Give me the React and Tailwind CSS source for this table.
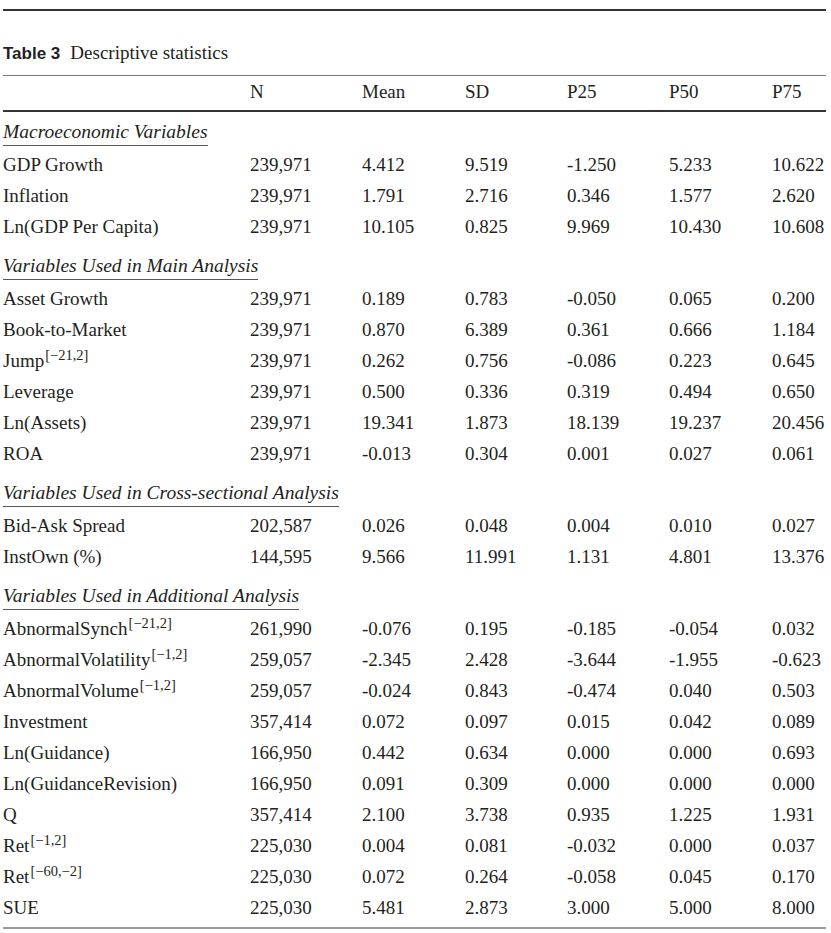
import React from "react";

const sections = [
  {
    title: "Macroeconomic Variables",
    first: true,
    rows: [
      ["GDP Growth", null, "239,971", "4.412", "9.519", "-1.250", "5.233", "10.622"],
      ["Inflation", null, "239,971", "1.791", "2.716", "0.346", "1.577", "2.620"],
      ["Ln(GDP Per Capita)", null, "239,971", "10.105", "0.825", "9.969", "10.430", "10.608"],
    ],
  },
  {
    title: "Variables Used in Main Analysis",
    rows: [
      ["Asset Growth", null, "239,971", "0.189", "0.783", "-0.050", "0.065", "0.200"],
      ["Book-to-Market", null, "239,971", "0.870", "6.389", "0.361", "0.666", "1.184"],
      ["Jump", "[−21,2]", "239,971", "0.262", "0.756", "-0.086", "0.223", "0.645"],
      ["Leverage", null, "239,971", "0.500", "0.336", "0.319", "0.494", "0.650"],
      ["Ln(Assets)", null, "239,971", "19.341", "1.873", "18.139", "19.237", "20.456"],
      ["ROA", null, "239,971", "-0.013", "0.304", "0.001", "0.027", "0.061"],
    ],
  },
  {
    title: "Variables Used in Cross-sectional Analysis",
    rows: [
      ["Bid-Ask Spread", null, "202,587", "0.026", "0.048", "0.004", "0.010", "0.027"],
      ["InstOwn (%)", null, "144,595", "9.566", "11.991", "1.131", "4.801", "13.376"],
    ],
  },
  {
    title: "Variables Used in Additional Analysis",
    rows: [
      ["AbnormalSynch", "[−21,2]", "261,990", "-0.076", "0.195", "-0.185", "-0.054", "0.032"],
      ["AbnormalVolatility", "[−1,2]", "259,057", "-2.345", "2.428", "-3.644", "-1.955", "-0.623"],
      ["AbnormalVolume", "[−1,2]", "259,057", "-0.024", "0.843", "-0.474", "0.040", "0.503"],
      ["Investment", null, "357,414", "0.072", "0.097", "0.015", "0.042", "0.089"],
      ["Ln(Guidance)", null, "166,950", "0.442", "0.634", "0.000", "0.000", "0.693"],
      ["Ln(GuidanceRevision)", null, "166,950", "0.091", "0.309", "0.000", "0.000", "0.000"],
      ["Q", null, "357,414", "2.100", "3.738", "0.935", "1.225", "1.931"],
      ["Ret", "[−1,2]", "225,030", "0.004", "0.081", "-0.032", "0.000", "0.037"],
      ["Ret", "[−60,−2]", "225,030", "0.072", "0.264", "-0.058", "0.045", "0.170"],
      ["SUE", null, "225,030", "5.481", "2.873", "3.000", "5.000", "8.000"],
    ],
  },
];

const cols = "grid grid-cols-[247px_112px_103px_102px_102px_103px_1fr]";

function DataRow({ row }) {
  const [label, sup, ...nums] = row;
  return (
    <div className={`${cols} h-[31px] leading-[31px] whitespace-nowrap`}>
      <div>
        {label}
        {sup && <sup className="text-[14.5px] ml-[1px]">{sup}</sup>}
      </div>
      {nums.map((n, i) => (
        <div key={i}>{n}</div>
      ))}
    </div>
  );
}

export default function App() {
  return (
    <div
      className="bg-white w-[831px] h-[933px] pt-[9px] text-[#231f20] text-[19px]"
      style={{ fontFamily: '"Liberation Serif", "Times New Roman", serif' }}
    >
      <div className="ml-[3px] w-[823px]">
        <div className="border-t-2 border-[#333]" />
        <div className="pt-[32px] pb-[11px] leading-[20px] border-b border-[#777] whitespace-nowrap">
          <span
            className="font-bold text-[17px] mr-[10px]"
            style={{ fontFamily: '"Liberation Sans", Arial, sans-serif' }}
          >
            Table 3
          </span>
          <span>Descriptive statistics</span>
        </div>
        <div className={`${cols} h-[36px] leading-[31px] border-b-2 border-[#333]`}>
          <div></div>
          <div>N</div>
          <div>Mean</div>
          <div>SD</div>
          <div>P25</div>
          <div>P50</div>
          <div>P75</div>
        </div>
        {sections.map((s) => (
          <div key={s.title}>
            <div className={s.first ? "h-[37px] pt-[6px]" : "h-[41px] pt-[10px]"}>
              <span className="inline-block italic text-[19.5px] leading-[27px] border-b border-[#555]">
                {s.title}
              </span>
            </div>
            {s.rows.map((r, i) => (
              <DataRow key={i} row={r} />
            ))}
          </div>
        ))}
        <div className="h-[4px] border-b-2 border-[#999] box-content" />
      </div>
    </div>
  );
}
